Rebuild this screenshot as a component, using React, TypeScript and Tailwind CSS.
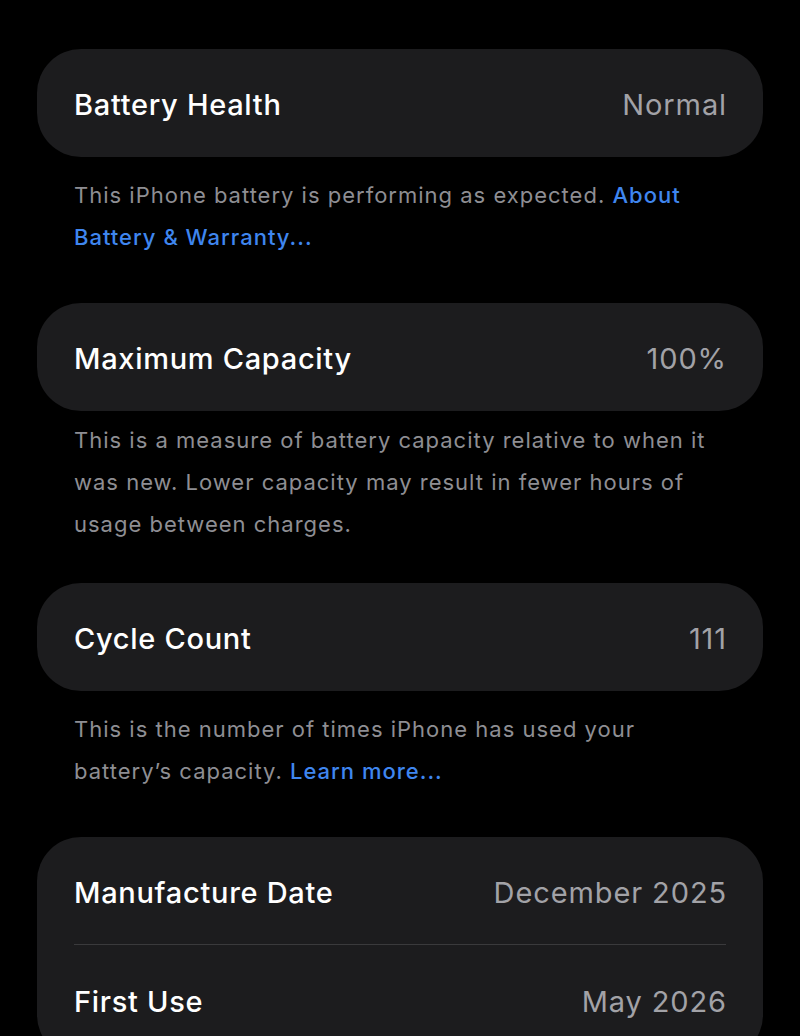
import type { ReactNode } from 'react'

const font = { fontFamily: 'Inter, "Noto Sans", sans-serif' }

function Row({ label, value, className = '' }: { label: string; value: string; className?: string }) {
  return (
    <div className={`flex items-center justify-between ${className}`}>
      <span className="text-[29px] font-medium tracking-[0.7px] text-white">{label}</span>
      <span className="-mr-[1px] text-[29px] font-normal tracking-[0.9px] text-[#a2a2a7]">{value}</span>
    </div>
  )
}

function Card({ children }: { children: ReactNode }) {
  return <div className="mx-[37px] rounded-[44px] bg-[#1c1c1e] px-[37px]">{children}</div>
}

function Footer({ children, className = '' }: { children: ReactNode; className?: string }) {
  return (
    <p className={`mx-[74px] text-[22px] leading-[42px] tracking-[1px] text-[#8e8e93] ${className}`}>
      {children}
    </p>
  )
}

function Link({ children }: { children: ReactNode }) {
  return <span className="font-medium text-[#3f86ef]">{children}</span>
}

export default function App() {
  return (
    <div className="min-h-[1036px] w-[800px] overflow-hidden bg-black pt-[49px]" style={font}>
      <Card>
        <Row label="Battery Health" value="Normal" className="h-[108px] pt-[3px]" />
      </Card>
      <Footer className="mt-[17px]">
        This iPhone battery is performing as expected. <Link>About</Link>
        <br />
        <Link>Battery &amp; Warranty...</Link>
      </Footer>

      <div className="mt-[45px]">
        <Card>
          <Row label="Maximum Capacity" value="100%" className="h-[108px] pt-[3px]" />
        </Card>
      </div>
      <Footer className="mt-[8px]">
        This is a measure of battery capacity relative to when it
        <br />
        was new. Lower capacity may result in fewer hours of
        <br />
        usage between charges.
      </Footer>

      <div className="mt-[38px]">
        <Card>
          <Row label="Cycle Count" value="111" className="h-[108px] pt-[3px]" />
        </Card>
      </div>
      <Footer className="mt-[17px]">
        This is the number of times iPhone has used your
        <br />
        battery’s capacity. <Link>Learn more...</Link>
      </Footer>

      <div className="mt-[45px]">
        <Card>
          <Row label="Manufacture Date" value="December 2025" className="h-[107px] pt-[5px]" />
          <div className="h-px bg-[#3a3a3c]" />
          <Row label="First Use" value="May 2026" className="h-[114px]" />
        </Card>
      </div>
    </div>
  )
}
